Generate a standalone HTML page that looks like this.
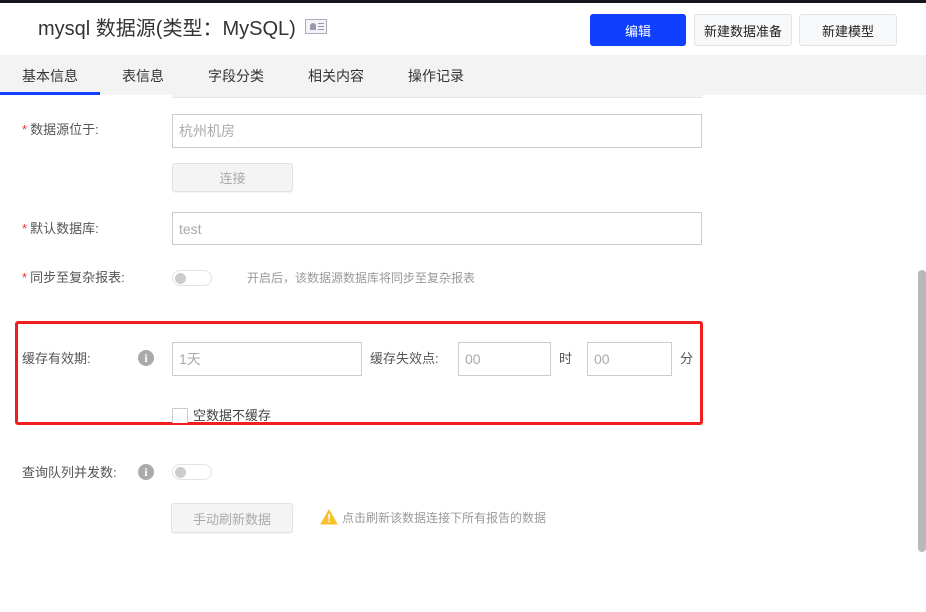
<!DOCTYPE html>
<html><head><meta charset="utf-8"><style>
*{box-sizing:border-box;margin:0;padding:0}
body{width:926px;height:612px;background:#fff;position:relative;overflow:hidden;font-family:"Liberation Sans","Noto Sans CJK SC",sans-serif;color:#333}
.a{position:absolute}
.t{font-size:13px;color:#555}
.inp{position:absolute;border:1px solid #ccc;background:#fff;font-size:14px;color:#aaa;padding-left:6px;display:flex;align-items:center}
.btn{position:absolute;border-radius:3px;font-size:13px;display:flex;align-items:center;justify-content:center}
.gbtn{background:#f4f4f4;border:1px solid #e2e2e2;color:#aaa;box-shadow:0 1px 1px rgba(0,0,0,.05)}
.sw{position:absolute;width:40px;height:16px;border:1px solid #e3e3e3;border-radius:8px;background:#fff}
.sw:after{content:"";position:absolute;left:2px;top:2px;width:11px;height:11px;border-radius:50%;background:#ccc}
.star{color:#e33;margin-right:3px}
.info{position:absolute;width:16px;height:16px;border-radius:50%;background:#aaa;color:#fff;font-size:12px;font-weight:bold;text-align:center;line-height:16px;font-family:"Liberation Serif",serif}
</style></head><body>
<div class="a" style="left:0;top:0;width:926px;height:3px;background:#15171f"></div>
<div class="a" style="left:38px;top:12px;font-size:20px;color:#333">mysql 数据源(类型：MySQL)</div>
<div class="a" style="left:305px;top:19px;width:22px;height:15px;border:1px solid #aab;background:#f3f3f6">
<div class="a" style="left:4px;top:3px;width:6px;height:7px;background:#99a;border-radius:3px 3px 0 0"></div>
<div class="a" style="left:12px;top:3px;width:6px;height:1px;background:#99a"></div>
<div class="a" style="left:12px;top:6px;width:6px;height:1px;background:#99a"></div>
<div class="a" style="left:12px;top:9px;width:6px;height:1px;background:#99a"></div></div>
<div class="btn" style="left:590px;top:14px;width:96px;height:32px;background:#1040ff;color:#fff">编辑</div>
<div class="btn" style="left:694px;top:14px;width:98px;height:32px;background:#f7f8fa;border:1px solid #e3e3e6;color:#222">新建数据准备</div>
<div class="btn" style="left:799px;top:14px;width:98px;height:32px;background:#f7f8fa;border:1px solid #e3e3e6;color:#222">新建模型</div>
<div class="a" style="left:0;top:55px;width:926px;height:40px;background:#f3f3f3"></div>
<div class="a" style="left:172px;top:90px;width:530px;height:8px;background:#f3f3f3;border-bottom:1px solid #e4e4e4"></div>
<div class="a" style="left:0;top:92px;width:100px;height:3px;background:#1040ff"></div>
<div class="a" style="top:66px;left:22px;font-size:14px;color:#333">基本信息</div>
<div class="a" style="top:66px;left:122px;font-size:14px;color:#333">表信息</div>
<div class="a" style="top:66px;left:208px;font-size:14px;color:#333">字段分类</div>
<div class="a" style="top:66px;left:308px;font-size:14px;color:#333">相关内容</div>
<div class="a" style="top:66px;left:408px;font-size:14px;color:#333">操作记录</div>

<div class="a t" style="left:22px;top:119px"><span class="star">*</span>数据源位于:</div>
<div class="inp" style="left:172px;top:114px;width:530px;height:34px">杭州机房</div>
<div class="btn gbtn" style="left:172px;top:163px;width:121px;height:29px">连接</div>
<div class="a t" style="left:22px;top:218px"><span class="star">*</span>默认数据库:</div>
<div class="inp" style="left:172px;top:212px;width:530px;height:33px">test</div>
<div class="a t" style="left:22px;top:267px"><span class="star">*</span>同步至复杂报表:</div>
<div class="sw" style="left:172px;top:270px"></div>
<div class="a" style="left:247px;top:269px;font-size:12px;color:#999">开启后，该数据源数据库将同步至复杂报表</div>

<div class="a" style="left:15px;top:321px;width:688px;height:104px;border:3px solid #f01e1e;border-radius:3px"></div>
<div class="a t" style="left:22px;top:348px">缓存有效期:</div>
<div class="info" style="left:138px;top:350px">i</div>
<div class="inp" style="left:172px;top:342px;width:190px;height:34px">1天</div>
<div class="a t" style="left:370px;top:348px">缓存失效点:</div>
<div class="inp" style="left:458px;top:342px;width:93px;height:34px">00</div>
<div class="a t" style="left:559px;top:348px">时</div>
<div class="inp" style="left:587px;top:342px;width:85px;height:34px">00</div>
<div class="a t" style="left:680px;top:348px">分</div>
<div class="a" style="left:172px;top:408px;width:16px;height:15px;border:1px solid #ccc;border-bottom:none;background:#fff"></div>
<div class="a" style="left:193px;top:406px;height:15px;overflow:hidden;font-size:13px;color:#444;line-height:19px">空数据不缓存</div>

<div class="a t" style="left:22px;top:462px">查询队列并发数:</div>
<div class="info" style="left:138px;top:464px">i</div>
<div class="sw" style="left:172px;top:464px"></div>
<div class="btn gbtn" style="left:171px;top:503px;width:122px;height:30px">手动刷新数据</div>
<svg class="a" style="left:320px;top:509px" width="18" height="16" viewBox="0 0 18 16"><path d="M9 1 L17 15 L1 15 Z" fill="#fbc02d" stroke="#fbc02d" stroke-linejoin="round"/><rect x="8.2" y="5" width="1.6" height="5.5" fill="#fff"/><rect x="8.2" y="11.7" width="1.6" height="1.6" fill="#fff"/></svg>
<div class="a" style="left:342px;top:509px;font-size:12px;color:#999">点击刷新该数据连接下所有报告的数据</div>

<div class="a" style="left:918px;top:270px;width:8px;height:282px;background:#b8b8b8;border-radius:4px"></div>
</body></html>
